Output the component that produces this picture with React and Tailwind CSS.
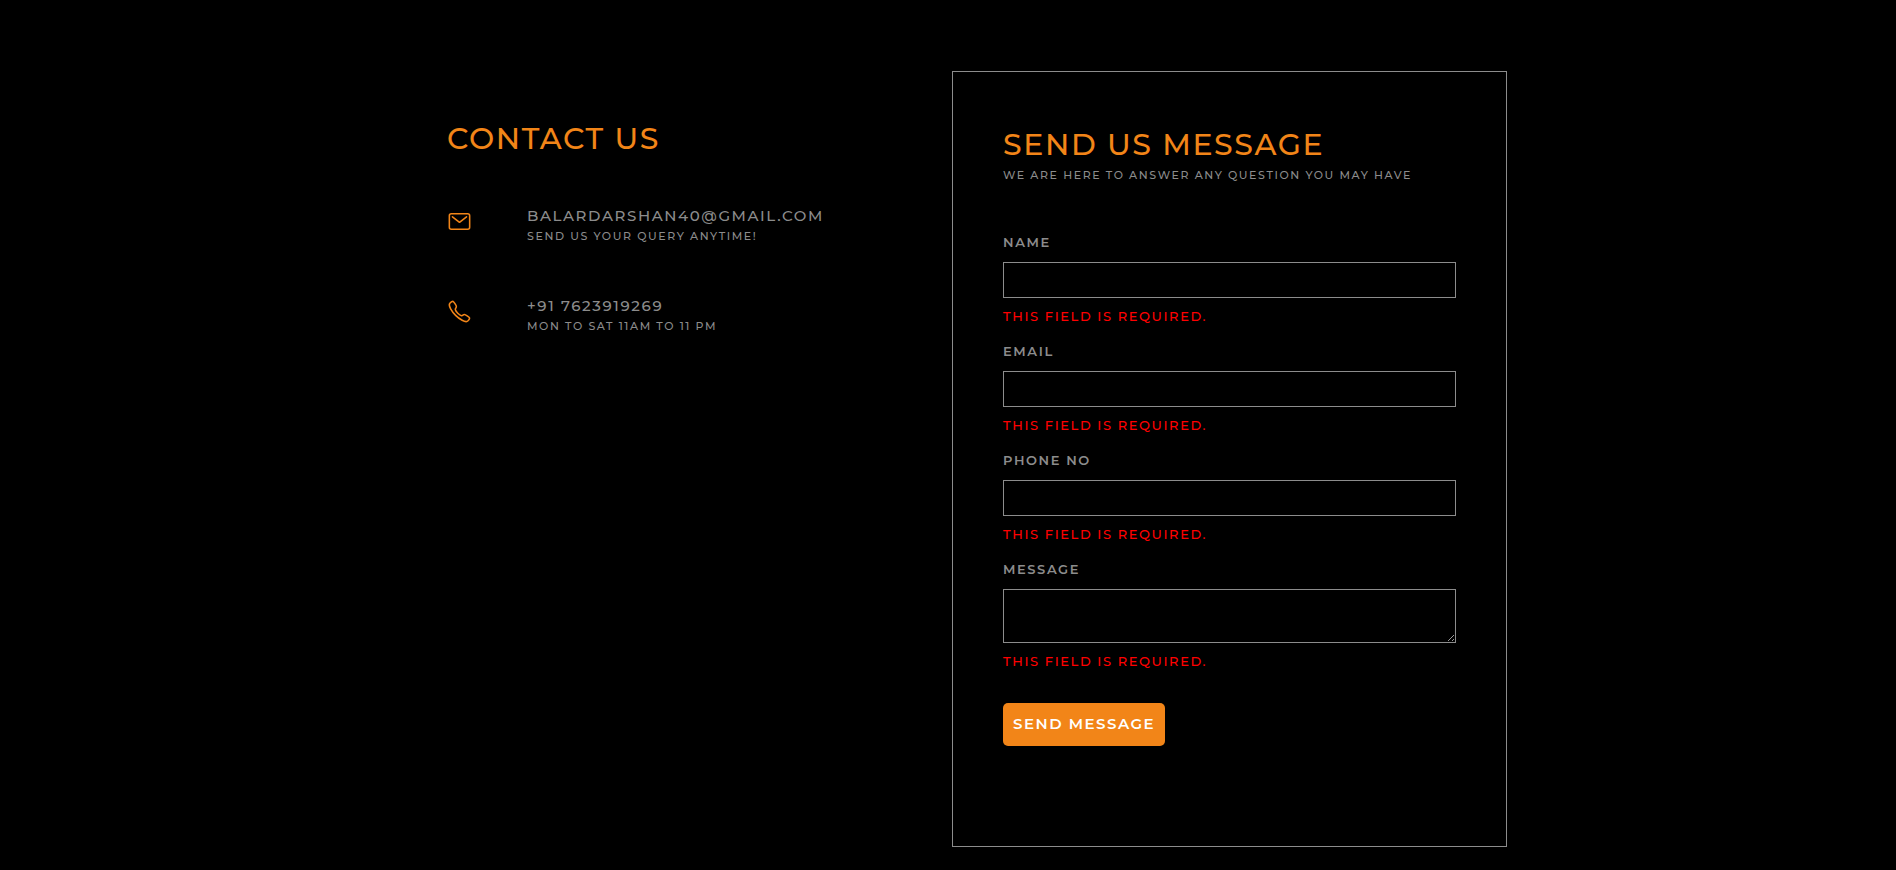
import { IoCallOutline, IoMailOutline } from "react-icons/io5";

const contacts = [
  {
    Icon: IoMailOutline,
    href: "mailto:balardarshan40@gmail.com",
    title: "balardarshan40@gmail.com",
    note: "Send us your query anytime!",
  },
  {
    Icon: IoCallOutline,
    href: "tel:+917623919269",
    title: "+91 7623919269",
    note: "Mon to Sat 11am to 11 pm",
  },
];

const fields = [
  { id: "name", label: "Name", type: "text" },
  { id: "email", label: "Email", type: "email" },
  { id: "phone", label: "Phone no", type: "tel" },
  { id: "message", label: "Message", multiline: true },
];

const control =
  "mt-[10px] block w-full border border-[#8c8c8c] bg-black px-2 text-sm text-white outline-none focus:border-[#f28518]";

function Field({ id, label, type, multiline }) {
  const shared = { id, name: id, "aria-invalid": true, "aria-describedby": `${id}-error` };
  return (
    <div>
      <label htmlFor={id} className="block text-[13px] leading-5 font-semibold">
        {label}
      </label>
      {multiline ? (
        <textarea {...shared} className={`${control} h-[54px] resize`} />
      ) : (
        <input {...shared} type={type} className={`${control} h-9`} />
      )}
      <p id={`${id}-error`} className="mt-2 text-[13px] leading-5 font-medium text-[#ff0000]">
        This field is required.
      </p>
    </div>
  );
}

export default function App() {
  return (
    <main className="min-h-screen bg-black px-4 pt-[71px] pb-6 font-['Montserrat',Inter,sans-serif] tracking-widest text-[#8c8c8c] uppercase">
      <div className="mx-auto grid max-w-[1118px] gap-2 md:grid-cols-2">
        <section className="px-[58px] pt-12">
          <h2 className="text-3xl leading-10 font-medium text-[#f28518]">Contact us</h2>
          <ul className="mt-[45px] flex flex-col gap-[50px]">
            {contacts.map(({ Icon, href, title, note }) => (
              <li key={href} className="flex gap-[55px]">
                <Icon className="mt-[5px] size-[25px] shrink-0 text-[#f28518]" aria-hidden="true" />
                <div>
                  <a href={href} className="block text-[15px] leading-6 font-medium">
                    {title}
                  </a>
                  <p className="text-[11px] leading-4 font-medium">{note}</p>
                </div>
              </li>
            ))}
          </ul>
        </section>

        <section className="border border-[#8c8c8c] px-[50px] pt-[53px] pb-[100px]">
          <h2 className="text-3xl leading-10 font-medium text-[#f28518]">Send us message</h2>
          <p className="text-[11px] leading-5 font-medium">
            We are here to answer any question you may have
          </p>
          <form noValidate className="mt-[47px]" onSubmit={(e) => e.preventDefault()}>
            <div className="flex flex-col gap-[15px]">
              {fields.map((field) => (
                <Field key={field.id} {...field} />
              ))}
            </div>
            <button
              type="submit"
              className="mt-8 rounded-[5px] bg-[#f28518] px-[10px] pt-[9px] pb-[10px] text-[15px] leading-6 font-semibold tracking-widest text-white uppercase"
            >
              Send message
            </button>
          </form>
        </section>
      </div>
    </main>
  );
}
